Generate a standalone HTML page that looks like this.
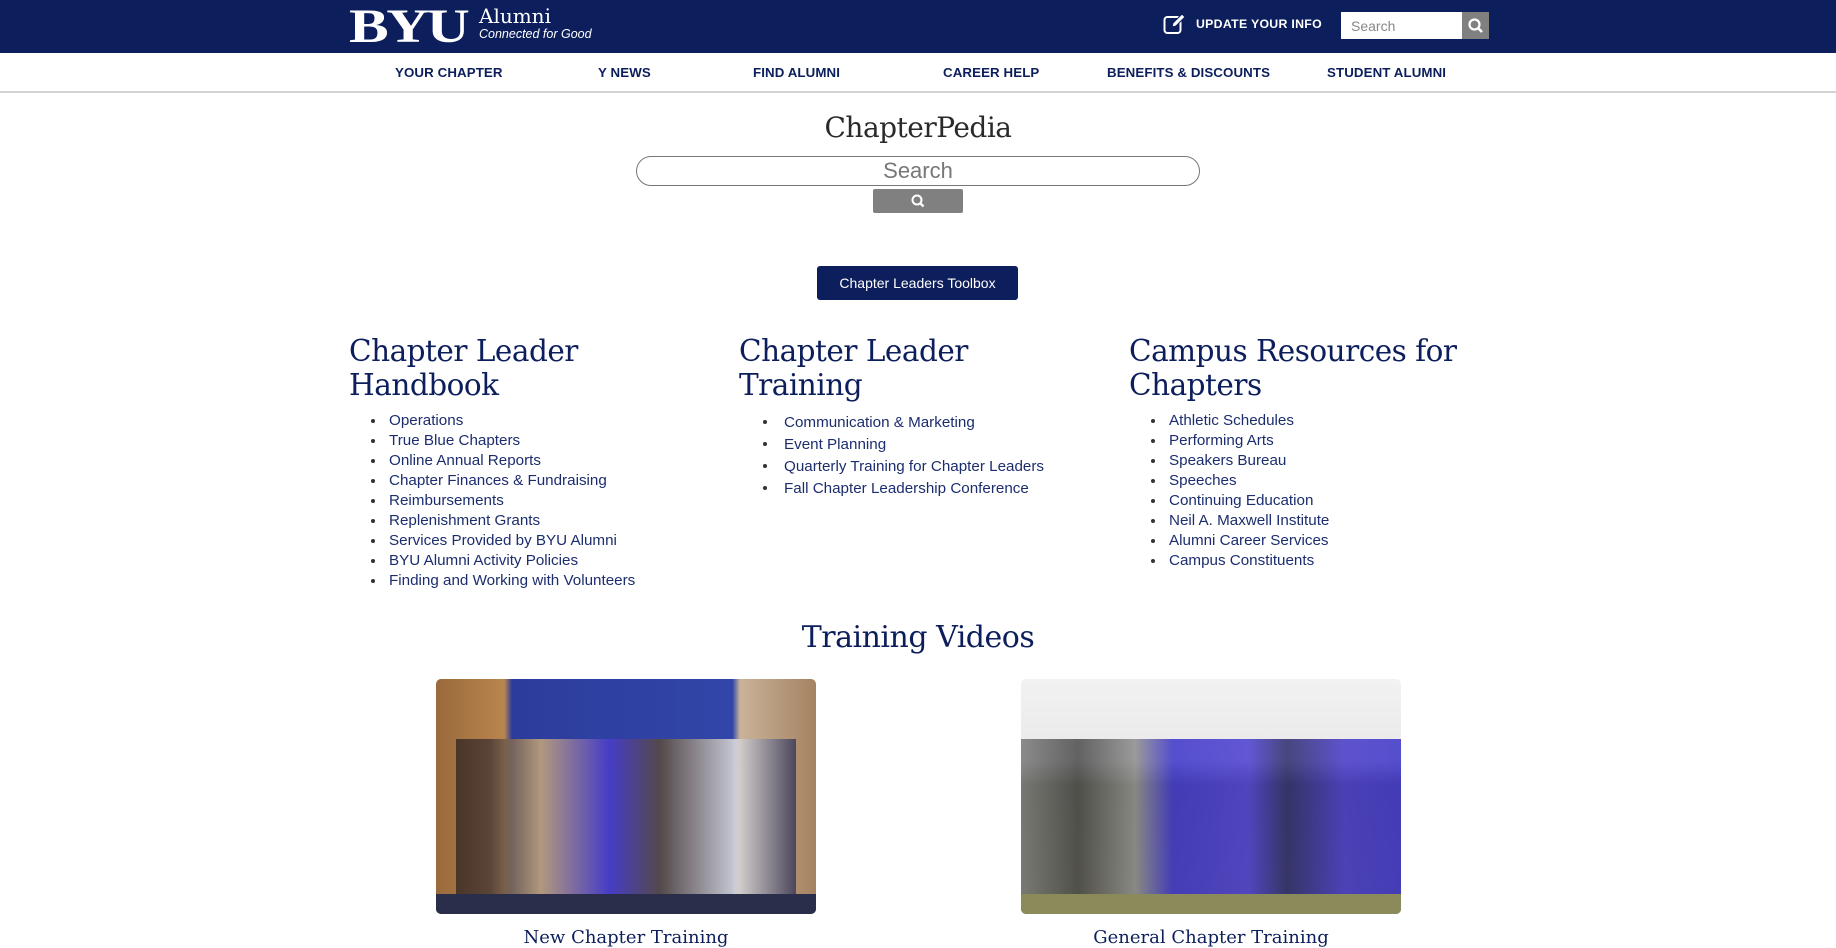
<!DOCTYPE html>
<html><head><meta charset="utf-8"><style>
*{box-sizing:border-box;margin:0;padding:0}
body{width:1836px;height:947px;overflow:hidden;background:#fff;font-family:"Liberation Sans",sans-serif;position:relative}
.hdr{position:absolute;left:0;top:0;width:1836px;height:53px;background:#0c1e5b}
.nav{position:absolute;top:53px;left:0;width:1836px;height:40px;border-bottom:2px solid #d4d4d4}
.nav span{position:absolute;top:12px;font-size:13.3px;font-weight:bold;color:#0c1e5b;letter-spacing:.1px}
.slab{font-family:"DejaVu Serif","Liberation Serif",serif;}
.abs{position:absolute}
h2{position:absolute;font-family:"DejaVu Serif",serif;font-weight:normal;font-size:29.5px;line-height:34px;color:#0c1e5b;letter-spacing:-0.5px}
ul{position:absolute;list-style:none;font-size:15.2px;color:#1c2d6e}
ul li{position:relative;padding-left:20px}
ul li:before{content:"";position:absolute;left:2px;top:8px;width:4px;height:4px;border-radius:50%;background:#333}
</style></head><body>
<div class="hdr">
 <div class="abs" style="left:349px;top:3px;color:#fff;font-family:'Liberation Serif',serif;font-weight:bold;font-size:48px;line-height:48px;letter-spacing:-2px;transform:scaleX(1.24);transform-origin:left">BYU</div>
 <div class="abs slab" style="left:479px;top:4px;color:#fff;font-size:20px">Alumni</div>
 <div class="abs" style="left:479px;top:27px;color:#fff;font-size:12.5px;font-style:italic">Connected for Good</div>
 <svg class="abs" style="left:1163px;top:13px" width="25" height="22" viewBox="0 0 25 22"><rect x="1.5" y="4" width="16" height="16" rx="3" fill="none" stroke="#fff" stroke-width="2"/><path d="M9 14l1-4 9-9 3 3-9 9z" fill="#fff" stroke="#0c1e5b" stroke-width="1"/></svg>
 <div class="abs" style="left:1196px;top:17px;color:#fff;font-size:12.3px;font-weight:bold;letter-spacing:.3px">UPDATE YOUR INFO</div>
 <div class="abs" style="left:1341px;top:12px;width:121px;height:27px;background:#fff;color:#888;font-size:14px;padding:6px 10px">Search</div>
 <div class="abs" style="left:1462px;top:12px;width:27px;height:27px;background:#808080"><svg width="27" height="27"><circle cx="12.5" cy="12.5" r="5" fill="none" stroke="#fff" stroke-width="2.2"/><path d="M16 16l4 4" stroke="#fff" stroke-width="2.6"/></svg></div>
</div>
<div class="nav">
 <span style="left:395px">YOUR CHAPTER</span>
 <span style="left:598px">Y NEWS</span>
 <span style="left:753px">FIND ALUMNI</span>
 <span style="left:943px">CAREER HELP</span>
 <span style="left:1107px">BENEFITS &amp; DISCOUNTS</span>
 <span style="left:1327px">STUDENT ALUMNI</span>
</div>
<div class="abs slab" style="left:0;width:1836px;top:111px;text-align:center;font-size:28px;color:#2a2a2a;letter-spacing:-0.5px">ChapterPedia</div>
<div class="abs" style="left:636px;top:156px;width:564px;height:30px;border:1px solid #777;border-radius:15px;text-align:center;font-size:22px;color:#777;line-height:28px">Search</div>
<div class="abs" style="left:873px;top:189px;width:90px;height:24px;background:#808080;border-radius:2px"><svg width="90" height="24"><circle cx="44" cy="11" r="4.5" fill="none" stroke="#fff" stroke-width="2"/><path d="M47 14l3.5 3.5" stroke="#fff" stroke-width="2.4"/></svg></div>
<div class="abs" style="left:817px;top:266px;width:201px;height:34px;background:#0c1e5b;border-radius:3px;color:#fff;font-size:14px;text-align:center;line-height:34px">Chapter Leaders Toolbox</div>

<h2 style="left:349px;top:334px">Chapter Leader<br>Handbook</h2>
<h2 style="left:739px;top:334px">Chapter Leader<br>Training</h2>
<h2 style="left:1129px;top:334px">Campus Resources for<br>Chapters</h2>
<ul style="left:369px;top:411px;line-height:20px">
<li>Operations</li><li>True Blue Chapters</li><li>Online Annual Reports</li><li>Chapter Finances &amp; Fundraising</li><li>Reimbursements</li><li>Replenishment Grants</li><li>Services Provided by BYU Alumni</li><li>BYU Alumni Activity Policies</li><li>Finding and Working with Volunteers</li></ul>
<ul style="left:761px;top:412px;line-height:22px">
<li style="padding-left:23px">Communication &amp; Marketing</li><li style="padding-left:23px">Event Planning</li><li style="padding-left:23px">Quarterly Training for Chapter Leaders</li><li style="padding-left:23px">Fall Chapter Leadership Conference</li></ul>
<ul style="left:1149px;top:411px;line-height:20px">
<li>Athletic Schedules</li><li>Performing Arts</li><li>Speakers Bureau</li><li>Speeches</li><li>Continuing Education</li><li>Neil A. Maxwell Institute</li><li>Alumni Career Services</li><li>Campus Constituents</li></ul>

<div class="abs slab" style="left:0;width:1836px;top:620px;text-align:center;font-size:30px;color:#0c1e5b;letter-spacing:-0.5px">Training Videos</div>

<div class="abs" style="left:436px;top:679px;width:380px;height:235px;border-radius:5px;overflow:hidden;background:linear-gradient(90deg,#9a6a3c 0,#b98550 18%,#2c3c9c 20%,#3146a8 78%,#c9b39a 80%,#a48260 100%)">
 <div class="abs" style="left:20px;top:60px;width:340px;height:175px;background:linear-gradient(90deg,#3a2a24,#4a3a34 10%,#c9a878 25%,#4a3ccc 45%,#5a4a3a 60%,#e0dedd 82%,#3a3a5a 100%);opacity:.85"></div>
 <div class="abs" style="left:0;top:215px;width:380px;height:20px;background:#2a2e4a"></div>
</div>
<div class="abs" style="left:1021px;top:679px;width:380px;height:235px;border-radius:5px;overflow:hidden;background:linear-gradient(180deg,#f2f2f2 0,#e8e8e8 35%,#6b6b4a 45%,#7a7a4c 100%)">
 <div class="abs" style="left:0;top:60px;width:380px;height:160px;background:linear-gradient(90deg,#7a7a7a,#4a4a4a 15%,#8c8c8c 30%,#3b33c8 40%,#4a3dd0 60%,#2a2a6a 70%,#4538c8 85%,#3b33c8 100%);opacity:.85"></div>
 <div class="abs" style="left:0;top:215px;width:380px;height:20px;background:#8a8a5a"></div>
</div>
<div class="abs slab" style="left:436px;width:380px;top:927px;text-align:center;font-size:18px;color:#0c1e5b">New Chapter Training</div>
<div class="abs slab" style="left:1021px;width:380px;top:927px;text-align:center;font-size:18px;color:#0c1e5b">General Chapter Training</div>
</body></html>
